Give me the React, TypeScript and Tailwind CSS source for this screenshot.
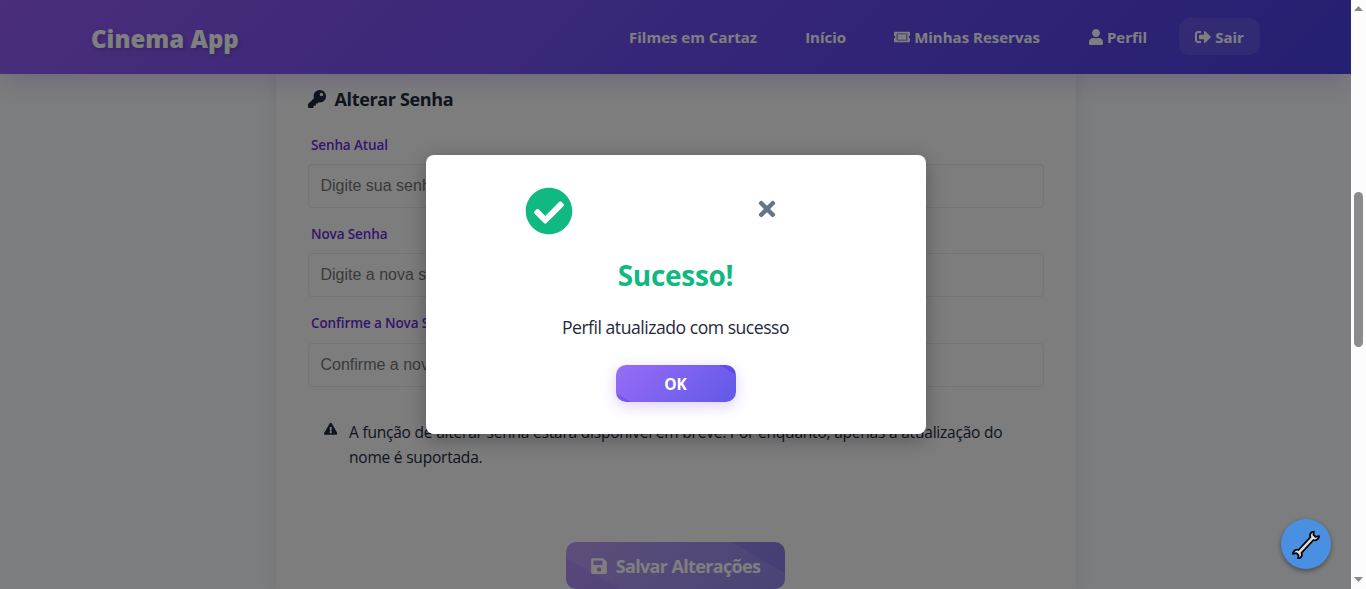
import React from "react";
import {
  FaCheckCircle,
  FaExclamationTriangle,
  FaKey,
  FaSave,
  FaSignOutAlt,
  FaTicketAlt,
  FaTimes,
  FaUser,
} from "react-icons/fa";

function Header() {
  return (
    <header className="relative z-10 flex h-[74px] shrink-0 items-center bg-[linear-gradient(135deg,#945cf8_0%,#7c52f2_30%,#4a40e4_100%)] px-[91px] text-white shadow-[0_10px_25px_-5px_rgba(124,58,237,0.25)]">
      <h1 className="mt-[3px] text-[24px] font-extrabold leading-none whitespace-nowrap [text-shadow:2px_2px_4px_rgba(0,0,0,0.2)]">
        Cinema App
      </h1>
      <nav className="ml-auto flex items-center text-[15px] font-bold whitespace-nowrap">
        <a className="mr-[48px]">Filmes em Cartaz</a>
        <a className="mr-[48px]">Início</a>
        <a className="mr-[49px] flex items-center gap-1">
          <FaTicketAlt className="size-4" />
          Minhas Reservas
        </a>
        <a className="mr-8 flex items-center gap-1">
          <FaUser className="h-4 w-[14px]" />
          Perfil
        </a>
        <button className="-mt-[2px] flex h-[37px] w-[81px] items-center justify-center gap-1 rounded-[10px] bg-white/10 pt-[2px] tracking-[-0.1px]">
          <FaSignOutAlt className="size-4" />
          Sair
        </button>
      </nav>
    </header>
  );
}

function Field({ label, placeholder }: { label: string; placeholder: string }) {
  return (
    <div className="flex flex-col">
      <label className="-mt-[0.5px] flex h-[21.5px] items-center pb-px pl-[3.5px] text-[13.5px] font-semibold tracking-[-0.12px] text-[#6d28d9]">
        {label}
      </label>
      <input
        placeholder={placeholder}
        className="mt-[8px] h-[44px] w-full rounded-[4px] border border-[#e2e8f0] bg-transparent px-[12px] font-['Liberation_Sans',sans-serif] text-[16px] placeholder:text-[#757575]"
      />
    </div>
  );
}

function ProfileCard() {
  return (
    <section className="flex h-[515px] w-[800px] flex-col bg-[#fafbfc] px-8 shadow-[0_0_16px_rgba(60,60,90,0.12)]">
      <h2 className="mt-[13px] flex h-[24px] items-center gap-[9px] text-[18px] font-bold tracking-[-0.35px] text-[#1e293b]">
        <FaKey className="-mt-px size-[18px]" />
        Alterar Senha
      </h2>
      <div className="mt-[24px] flex flex-col gap-[16.4px]">
        <Field label="Senha Atual" placeholder="Digite sua senha atual" />
        <Field label="Nova Senha" placeholder="Digite a nova senha" />
        <Field label="Confirme a Nova Senha" placeholder="Confirme a nova senha" />
      </div>
      <div className="mt-[33px] flex gap-3 pl-4 text-[#1e293b]">
        <FaExclamationTriangle className="mt-[2px] size-[13.5px] shrink-0" />
        <p className="text-[15.5px] leading-[25px] tracking-[-0.21px] whitespace-nowrap">
          A função de alterar senha estará disponível em breve. Por enquanto, apenas a atualização do
          <br />
          nome é suportada.
        </p>
      </div>
      <button className="mt-auto flex h-[47px] w-[219px] shrink-0 items-center justify-center gap-[9px] self-center rounded-[10px] bg-[linear-gradient(30deg,transparent_17.9%,rgba(255,255,255,0.1)_18.1%,rgba(255,255,255,0.1)_81.9%,transparent_82.1%),linear-gradient(135deg,#b690f4,#827cea)] pt-[2px] text-[18px] font-bold tracking-[-0.65px] whitespace-nowrap text-white">
        <FaSave className="-mt-[2px] h-[18px] w-4" />
        Salvar Alterações
      </button>
    </section>
  );
}

function SuccessDialog() {
  return (
    <div className="absolute inset-0 z-20 flex items-start justify-center bg-black/50 pt-[155px]">
      <div className="flex h-[279px] w-[500px] flex-col items-center rounded-[8px] bg-white shadow-[0_5px_20px_rgba(0,0,0,0.3)]">
        <div className="mt-[32px] flex w-full justify-between pl-[99.5px] pr-[149px]">
          <FaCheckCircle className="size-[48px] text-[#10b981]" />
          <FaTimes className="mt-[10px] h-[24px] w-[20px] text-[#64748b]" />
        </div>
        <h3 className="mt-5 text-[28px] font-bold leading-[40px] tracking-[-0.3px] text-[#10b981]">Sucesso!</h3>
        <p className="mt-[18px] text-[17.6px] leading-[28px] tracking-[-0.48px] text-[#1e293b]">Perfil atualizado com sucesso</p>
        <button className="mt-[24px] h-[37px] w-[120px] shrink-0 rounded-[10px] bg-[linear-gradient(30deg,transparent_8.3%,rgba(255,255,255,0.1)_8.7%,rgba(255,255,255,0.1)_90.6%,transparent_91%),linear-gradient(135deg,#8b5cf6,#4f46e5)] pt-[2px] text-[15.5px] font-bold text-white shadow-[0_4px_15px_rgba(139,92,246,0.3)]">
          OK
        </button>
      </div>
    </div>
  );
}

function WrenchButton() {
  return (
    <button className="absolute right-5 bottom-5 z-30 flex size-[50px] items-center justify-center rounded-full bg-[#4a90e2] shadow-[0_2px_5px_rgba(0,0,0,0.4)]">
      <svg viewBox="0 0 28 28" className="mt-[2px] size-7">
        <g transform="rotate(-47 14 14)">
          <path
            d="M5.2 11.9H22.8C23.8 9.3 27 8.6 29.4 10.4L26.6 12.5V15.5L29.4 17.6C27 19.4 23.8 18.7 22.8 16.1H5.2C4.2 18.7 1 19.4-1.4 17.6L1.4 15.5V12.5L-1.4 10.4C1 8.6 4.2 9.3 5.2 11.9Z"
            fill="#dcdcdc"
            stroke="#050505"
            strokeWidth="1.8"
            strokeLinejoin="round"
          />
        </g>
      </svg>
    </button>
  );
}

function Scrollbar() {
  return (
    <aside className="flex w-[15px] shrink-0 flex-col items-center bg-[#fcfcfc]">
      <svg viewBox="0 0 9 5" className="mt-[6px] h-[5px] w-[9px] shrink-0">
        <path d="M4.5 0 9 5H0Z" fill="#8b8b8b" />
      </svg>
      <div className="mt-[181px] h-[155px] w-[9px] rounded-full bg-[#8b8b8b]" />
      <svg viewBox="0 0 9 5" className="mt-auto mb-[7px] h-[5px] w-[9px] shrink-0">
        <path d="M0 0h9L4.5 5Z" fill="#8b8b8b" />
      </svg>
    </aside>
  );
}

export default function App() {
  return (
    <div className="flex h-[589px] w-[1366px] overflow-hidden font-['Segoe_UI','Open_Sans','Noto_Sans',sans-serif]">
      <div className="relative flex w-[1351px] flex-col overflow-hidden bg-[#f8fafc]">
        <Header />
        <main className="flex justify-center">
          <ProfileCard />
        </main>
        <SuccessDialog />
        <WrenchButton />
      </div>
      <Scrollbar />
    </div>
  );
}
